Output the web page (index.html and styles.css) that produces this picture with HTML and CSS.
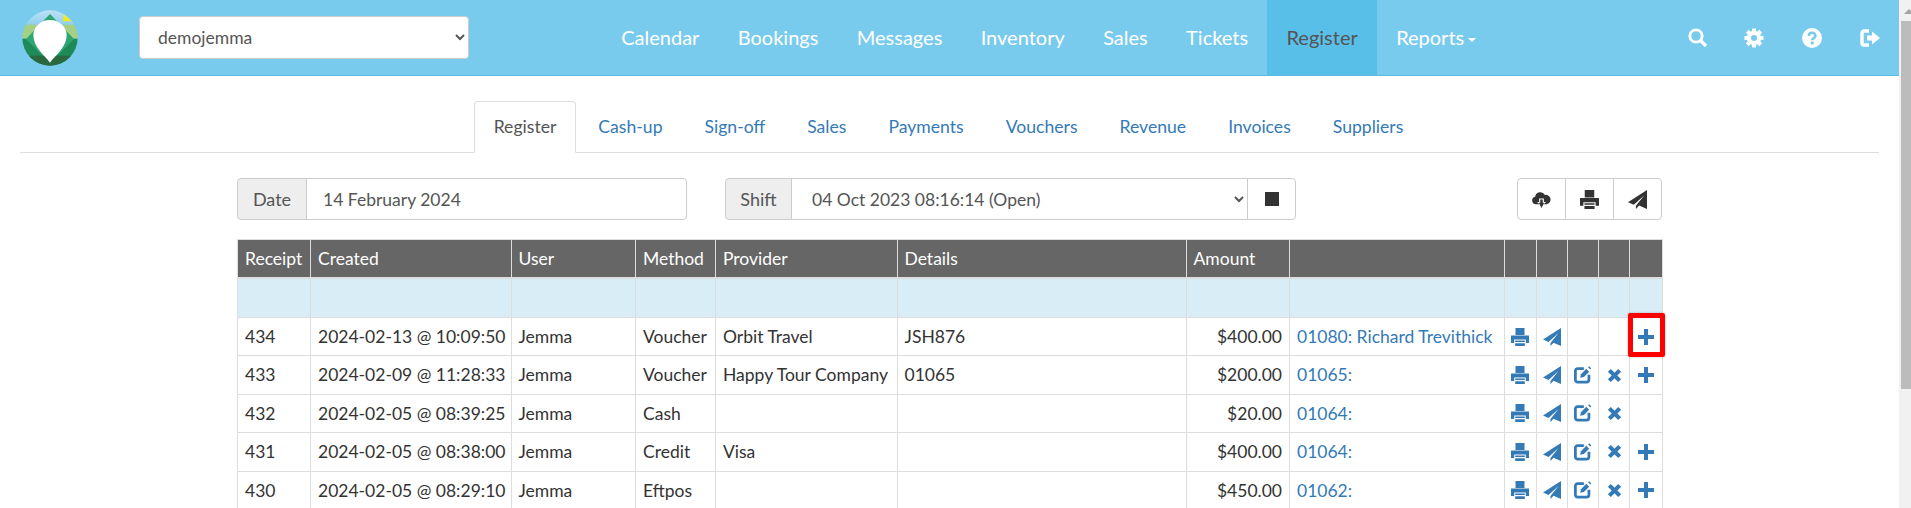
FILE: index.html
```html
<!DOCTYPE html>
<html lang="en">
<head>
    <meta charset="UTF-8">
    <title>Register</title>
    <link rel="stylesheet" href="styles.css">
</head>
<body>
    <svg class="sprite" xmlns="http://www.w3.org/2000/svg">
        <symbol id="i-search" viewBox="0 0 20 20">
            <circle cx="8" cy="8" r="6.2" fill="none" stroke="currentColor" stroke-width="2.8"/>
            <path d="M12.5 12.5l5.5 5.5" stroke="currentColor" stroke-width="3.4" fill="none"/>
        </symbol>
        <symbol id="i-cog" viewBox="0 0 20 20">
            <circle cx="10" cy="10" r="5.2" fill="none" stroke="currentColor" stroke-width="4"/>
            <g fill="currentColor">
                <rect x="8" y="0.5" width="4" height="19"/>
                <rect x="8" y="0.5" width="4" height="19" transform="rotate(45 10 10)"/>
                <rect x="8" y="0.5" width="4" height="19" transform="rotate(90 10 10)"/>
                <rect x="8" y="0.5" width="4" height="19" transform="rotate(135 10 10)"/>
            </g>
            <circle class="cog-hole" cx="10" cy="10" r="3"/>
        </symbol>
        <symbol id="i-help" viewBox="0 0 20 20">
            <circle cx="10" cy="10" r="10" fill="currentColor"/>
            <path class="help-mark" d="M6.8 8c0-4.2 6.6-4.2 6.6-.2 0 2.3-3.2 2.3-3.2 4.4"/>
            <rect class="help-dot" x="8.7" y="13.6" width="3" height="2.8"/>
        </symbol>
        <symbol id="i-logout" viewBox="0 0 20 20">
            <path d="M9 3H4a2 2 0 0 0-2 2v10a2 2 0 0 0 2 2h5" fill="none" stroke="currentColor" stroke-width="3.4"/>
            <path d="M7 7.5h5V3.5l8 6.5-8 6.5v-4H7z" fill="currentColor"/>
        </symbol>
        <symbol id="i-cloud" viewBox="0 0 20 20">
            <path d="M4 15a4 4 0 0 1-.7-7.9A5.5 5.5 0 0 1 13.6 5.2 4.9 4.9 0 1 1 15.500 15z" fill="currentColor"/>
            <path d="M7.500 9h5v3.500h2.300L10 17.200 5.200 12.500h2.300z" fill="#fff"/>
            <path d="M8.700 10h2.600v3.500h1.500L10 19 7.200 13.500h1.500z" fill="currentColor"/>
        </symbol>
        <symbol id="i-print" viewBox="0 0 18 18">
            <path d="M4.500 0h9v7h-9zM0 7.500h18V15h-3.200v-3.500H3.200V15H0z" fill="currentColor"/>
            <path d="M4.200 12.500h9.600v1.400H4.200zM4.200 15.200h9.600V18H4.200z" fill="currentColor"/>
        </symbol>
        <symbol id="i-send" viewBox="0 0 18 18">
            <path d="M18 0L0 11.500 5.500 14 15.500 5 7.500 15v3l3-3.200L18 18z" fill="currentColor"/>
        </symbol>
        <symbol id="i-edit" viewBox="0.700 0.800 17 17">
            <path d="M10 3.200H4.200A2.200 2.200 0 0 0 2 5.400v8.400A2.200 2.200 0 0 0 4.200 16h8.400a2.200 2.200 0 0 0 2.200-2.200V9" fill="none" stroke="currentColor" stroke-width="2.600"/>
            <path d="M6.500 12l.8-3.500 5-5 2.700 2.700-5 5z" fill="currentColor"/>
            <path d="M14 2l1-1 2 2-1 1z" fill="currentColor"/>
        </symbol>
        <symbol id="i-remove" viewBox="0 0 16 16">
            <path d="M2.500 2.500l11 11M13.500 2.500l-11 11" fill="none" stroke="currentColor" stroke-width="4.400"/>
        </symbol>
        <symbol id="i-plus" viewBox="0 0 18 18">
            <path d="M7 1h4v6h6v4h-6v6H7v-6H1V7h6z" fill="currentColor"/>
        </symbol>
    </svg>

    <div class="page">
        <div class="page-main">
            <nav class="navbar">
                <svg class="logo" viewBox="60 22 180 180">
                    <defs>
                        <clipPath id="logo-clip"><circle cx="150" cy="112" r="83"/></clipPath>
                        <linearGradient id="logo-sky" x1="0" y1="0" x2="0" y2="1">
                            <stop offset="0" stop-color="#c4e4f6"/>
                            <stop offset="1" stop-color="#8ed0ee"/>
                        </linearGradient>
                    </defs>
                    <g clip-path="url(#logo-clip)">
                        <rect x="60" y="22" width="180" height="50" fill="url(#logo-sky)"/>
                        <rect x="60" y="72" width="180" height="42" fill="#a5d184"/>
                        <rect x="60" y="114" width="180" height="90" fill="#1e8a58"/>
                        <polygon points="150,40 222,115 150,187 78,115" fill="#2fa574"/>
                        <polygon points="112,135 188,135 165,165 135,165" fill="#10b48d"/>
                        <rect x="60" y="165" width="180" height="40" fill="#2a693f"/>
                        <polygon points="190,40 216,62 190,62" fill="#f4e81e"/>
                    </g>
                    <path d="M150 186C136 166 100 140 100 104a50 46 0 0 1 100 0c0 36-36 62-50 82z" fill="#fff"/>
                </svg>
                <select class="account-select">
                    <option>demojemma</option>
                </select>
                <ul class="nav-menu">
                    <li><a href="#">Calendar</a></li>
                    <li><a href="#">Bookings</a></li>
                    <li><a href="#">Messages</a></li>
                    <li><a href="#">Inventory</a></li>
                    <li><a href="#">Sales</a></li>
                    <li><a href="#">Tickets</a></li>
                    <li class="active"><a href="#">Register</a></li>
                    <li><a href="#">Reports<span class="caret"></span></a></li>
                </ul>
                <ul class="nav-icons">
                    <li><svg class="nav-icon"><use href="#i-search"/></svg></li>
                    <li><svg class="nav-icon cog"><use href="#i-cog"/></svg></li>
                    <li><svg class="nav-icon help"><use href="#i-help"/></svg></li>
                    <li><svg class="nav-icon"><use href="#i-logout"/></svg></li>
                </ul>
            </nav>

            <ul class="tabs">
                <li class="active"><a href="#">Register</a></li>
                <li><a href="#">Cash-up</a></li>
                <li><a href="#">Sign-off</a></li>
                <li><a href="#">Sales</a></li>
                <li><a href="#">Payments</a></li>
                <li><a href="#">Vouchers</a></li>
                <li><a href="#">Revenue</a></li>
                <li><a href="#">Invoices</a></li>
                <li><a href="#">Suppliers</a></li>
            </ul>

            <div class="content">
                <div class="toolbar">
                    <div class="input-group date-group">
                        <span class="addon date-addon">Date</span>
                        <input class="field" type="text" value="14 February 2024">
                    </div>
                    <div class="input-group shift-group">
                        <span class="addon shift-addon">Shift</span>
                        <select class="field">
                            <option>04 Oct 2023 08:16:14 (Open)</option>
                        </select>
                        <button class="btn stop-btn"><span class="stop-icon"></span></button>
                    </div>
                    <div class="btn-group">
                        <button class="btn"><svg class="btn-icon"><use href="#i-cloud"/></svg></button>
                        <button class="btn"><svg class="btn-icon"><use href="#i-print"/></svg></button>
                        <button class="btn"><svg class="btn-icon"><use href="#i-send"/></svg></button>
                    </div>
                </div>

                <table class="register-table">
                    <colgroup>
                        <col class="c-receipt"><col class="c-created"><col class="c-user"><col class="c-method">
                        <col class="c-provider"><col class="c-details"><col class="c-amount"><col class="c-booking">
                        <col class="c-a1"><col class="c-a2"><col class="c-a3"><col class="c-a4"><col class="c-a5">
                    </colgroup>
                    <thead>
                        <tr>
                            <th>Receipt</th><th>Created</th><th>User</th><th>Method</th><th>Provider</th><th>Details</th><th>Amount</th>
                            <th></th><th></th><th></th><th></th><th></th><th></th>
                        </tr>
                    </thead>
                    <tbody>
                        <tr class="info">
                            <td>&nbsp;</td><td></td><td></td><td></td><td></td><td></td><td></td><td></td><td></td><td></td><td></td><td></td><td></td>
                        </tr>
                        <tr>
                            <td>434</td><td>2024-02-13 @ 10:09:50</td><td>Jemma</td><td>Voucher</td><td>Orbit Travel</td><td>JSH876</td>
                            <td class="amount">$400.00</td><td><a href="#">01080: Richard Trevithick</a></td>
                            <td class="act"><svg class="act-icon"><use href="#i-print"/></svg></td>
                            <td class="act"><svg class="act-icon"><use href="#i-send"/></svg></td>
                            <td class="act"></td>
                            <td class="act"></td>
                            <td class="act highlighted"><svg class="act-icon"><use href="#i-plus"/></svg><span class="callout"></span></td>
                        </tr>
                        <tr>
                            <td>433</td><td>2024-02-09 @ 11:28:33</td><td>Jemma</td><td>Voucher</td><td>Happy Tour Company</td><td>01065</td>
                            <td class="amount">$200.00</td><td><a href="#">01065:</a></td>
                            <td class="act"><svg class="act-icon"><use href="#i-print"/></svg></td>
                            <td class="act"><svg class="act-icon"><use href="#i-send"/></svg></td>
                            <td class="act"><svg class="act-icon"><use href="#i-edit"/></svg></td>
                            <td class="act"><svg class="act-icon small"><use href="#i-remove"/></svg></td>
                            <td class="act"><svg class="act-icon"><use href="#i-plus"/></svg></td>
                        </tr>
                        <tr>
                            <td>432</td><td>2024-02-05 @ 08:39:25</td><td>Jemma</td><td>Cash</td><td></td><td></td>
                            <td class="amount">$20.00</td><td><a href="#">01064:</a></td>
                            <td class="act"><svg class="act-icon"><use href="#i-print"/></svg></td>
                            <td class="act"><svg class="act-icon"><use href="#i-send"/></svg></td>
                            <td class="act"><svg class="act-icon"><use href="#i-edit"/></svg></td>
                            <td class="act"><svg class="act-icon small"><use href="#i-remove"/></svg></td>
                            <td class="act"></td>
                        </tr>
                        <tr>
                            <td>431</td><td>2024-02-05 @ 08:38:00</td><td>Jemma</td><td>Credit</td><td>Visa</td><td></td>
                            <td class="amount">$400.00</td><td><a href="#">01064:</a></td>
                            <td class="act"><svg class="act-icon"><use href="#i-print"/></svg></td>
                            <td class="act"><svg class="act-icon"><use href="#i-send"/></svg></td>
                            <td class="act"><svg class="act-icon"><use href="#i-edit"/></svg></td>
                            <td class="act"><svg class="act-icon small"><use href="#i-remove"/></svg></td>
                            <td class="act"><svg class="act-icon"><use href="#i-plus"/></svg></td>
                        </tr>
                        <tr>
                            <td>430</td><td>2024-02-05 @ 08:29:10</td><td>Jemma</td><td>Eftpos</td><td></td><td></td>
                            <td class="amount">$450.00</td><td><a href="#">01062:</a></td>
                            <td class="act"><svg class="act-icon"><use href="#i-print"/></svg></td>
                            <td class="act"><svg class="act-icon"><use href="#i-send"/></svg></td>
                            <td class="act"><svg class="act-icon"><use href="#i-edit"/></svg></td>
                            <td class="act"><svg class="act-icon small"><use href="#i-remove"/></svg></td>
                            <td class="act"><svg class="act-icon"><use href="#i-plus"/></svg></td>
                        </tr>
                    </tbody>
                </table>
            </div>
        </div>

        <div class="scrollbar">
            <div class="scroll-arrow"></div>
            <div class="scroll-thumb"></div>
        </div>
    </div>
</body>
</html>
```

FILE: styles.css
```css
html, body {
    margin: 0;
    height: 100%;
    overflow: hidden;
    background: #fff;
}
body {
    font-family: Lato, "Open Sans", sans-serif;
    font-size: 16px;
    color: #333;
}
a {
    text-decoration: none;
    color: #337ab7;
}
ul {
    list-style: none;
    margin: 0;
    padding: 0;
}
.sprite {
    display: none;
}

.page {
    display: flex;
    height: 508px;
    overflow: hidden;
}
.page-main {
    flex: 1;
    min-width: 0;
}

/* top bar */
.navbar {
    display: flex;
    align-items: center;
    height: 75px;
    background-color: #79cbed;
    border-bottom: 1px solid #5dbbe2;
}
.logo {
    width: 60px;
    height: 60px;
    margin-left: 20px;
    flex: none;
}
.account-select {
    width: 330px;
    height: 43px;
    margin-left: 59px;
    padding: 0 14px;
    font-family: Lato, sans-serif;
    font-size: 17.5px;
    color: #555;
    background-color: #fff;
    border: 1px solid #ccc;
    border-radius: 4px;
}
.nav-menu {
    display: flex;
    margin-left: 133px;
    height: 75px;
}
.nav-menu a {
    display: block;
    padding: 0 19.2px;
    font-size: 20px;
    line-height: 75px;
    color: #fff;
}
.nav-menu .active a {
    color: #555;
    background-color: #58bfe9;
}
.caret {
    display: inline-block;
    margin-left: 4px;
    vertical-align: middle;
    border-top: 4px solid #fff;
    border-left: 4px solid transparent;
    border-right: 4px solid transparent;
}
.nav-icons {
    display: flex;
    margin-left: auto;
}
.nav-icons li {
    display: flex;
    align-items: center;
    justify-content: center;
    width: 58px;
    height: 71px;
}
.nav-icons li:first-child {
    width: 54px;
    padding-left: 4px;
}
.nav-icon {
    width: 20px;
    height: 20px;
    color: #fff;
}
.cog-hole {
    fill: #79cbed;
}
.help-mark {
    fill: none;
    stroke: #79cbed;
    stroke-width: 2.6;
}
.help-dot {
    fill: #79cbed;
}

/* tabs */
.tabs {
    display: flex;
    justify-content: center;
    margin: 25px 20px 0;
    height: 51px;
    font-size: 17.6px;
    border-bottom: 1px solid #ddd;
}
.tabs li {
    margin-right: 2px;
    margin-bottom: -1px;
}
.tabs a {
    display: block;
    height: 50px;
    padding: 0 19px;
    line-height: 50px;
    border: 1px solid transparent;
    border-radius: 4px 4px 0 0;
}
.tabs .active a {
    color: #555;
    background-color: #fff;
    border-color: #ddd #ddd #fff;
}

/* date, shift, buttons */
.content {
    width: 1425px;
    margin: 25px auto 0;
}
.toolbar {
    display: flex;
    height: 42px;
    margin-bottom: 19px;
}
.input-group {
    display: flex;
}
.date-group {
    width: 450px;
}
.shift-group {
    width: 571px;
    margin-left: 38px;
}
.addon {
    display: flex;
    align-items: center;
    justify-content: center;
    font-size: 18px;
    color: #555;
    background-color: #eee;
    border: 1px solid #ccc;
    border-radius: 4px 0 0 4px;
    flex: none;
}
.date-addon {
    width: 70px;
    box-sizing: border-box;
}
.shift-addon {
    width: 67px;
    box-sizing: border-box;
}
.field {
    flex: 1;
    min-width: 0;
    box-sizing: border-box;
    height: 42px;
    margin-left: -1px;
    padding: 0 16px;
    font-family: Lato, sans-serif;
    font-size: 17.5px;
    color: #555;
    background-color: #fff;
    border: 1px solid #ccc;
    border-radius: 0 4px 4px 0;
}
.shift-group .field {
    border-radius: 0;
}
.btn {
    display: flex;
    align-items: center;
    justify-content: center;
    box-sizing: border-box;
    width: 49px;
    height: 42px;
    padding: 0;
    margin-left: -1px;
    background-color: #fff;
    border: 1px solid #ccc;
    color: #333;
}
.stop-btn {
    border-radius: 0 4px 4px 0;
}
.stop-icon {
    width: 14px;
    height: 14px;
    background-color: #333;
}
.btn-group {
    display: flex;
    margin-left: auto;
}
.btn-group .btn:first-child {
    border-radius: 4px 0 0 4px;
}
.btn-group .btn:last-child {
    border-radius: 0 4px 4px 0;
}
.btn-icon {
    width: 19px;
    height: 19px;
}

/* table */
.register-table {
    width: 1425px;
    table-layout: fixed;
    border-collapse: collapse;
}
.c-receipt { width: 73px; }
.c-created { width: 200.5px; }
.c-user { width: 124.5px; }
.c-method { width: 80px; }
.c-provider { width: 181.5px; }
.c-details { width: 289px; }
.c-amount { width: 103.5px; }
.c-booking { width: 215px; }
.c-a1 { width: 31.5px; }
.c-a2 { width: 31px; }
.c-a3 { width: 31.5px; }
.c-a4 { width: 31px; }
.c-a5 { width: 33px; }

.register-table th,
.register-table td {
    padding: 8px 7px;
    height: 21.43px;
    font-size: 17.5px;
    line-height: 21.43px;
    text-align: left;
    font-weight: normal;
    white-space: nowrap;
    border: 1px solid #ddd;
}
.register-table th {
    color: #fff;
    background-color: #666;
    border-bottom-width: 2px;
}
.register-table .info td {
    background-color: #d9edf7;
}
.register-table td.amount {
    text-align: right;
}
.register-table td.act {
    padding: 0;
    text-align: center;
}
.act-icon {
    display: block;
    width: 18px;
    height: 18px;
    margin: 0 auto;
    color: #337ab7;
}
.act-icon.small {
    width: 15px;
    height: 15px;
}
.highlighted {
    position: relative;
}
.callout {
    position: absolute;
    top: -5px;
    left: -2px;
    width: 27px;
    height: 34px;
    border: 5px solid #f00;
    border-radius: 2px;
    box-shadow: 0 0 2px rgba(0, 0, 0, 0.3);
}

/* page scrollbar */
.scrollbar {
    flex: none;
    width: 12px;
    height: 508px;
    background-color: #f1f1f1;
    overflow: hidden;
}
.scroll-arrow {
    width: 0;
    margin: 9px 0 0 5px;
    border-bottom: 5px solid #a3a3a3;
    border-left: 5px solid transparent;
    border-right: 5px solid transparent;
}
.scroll-thumb {
    height: 368px;
    margin: 7px 0 0 2px;
    background-color: #bcbcbc;
}
```
